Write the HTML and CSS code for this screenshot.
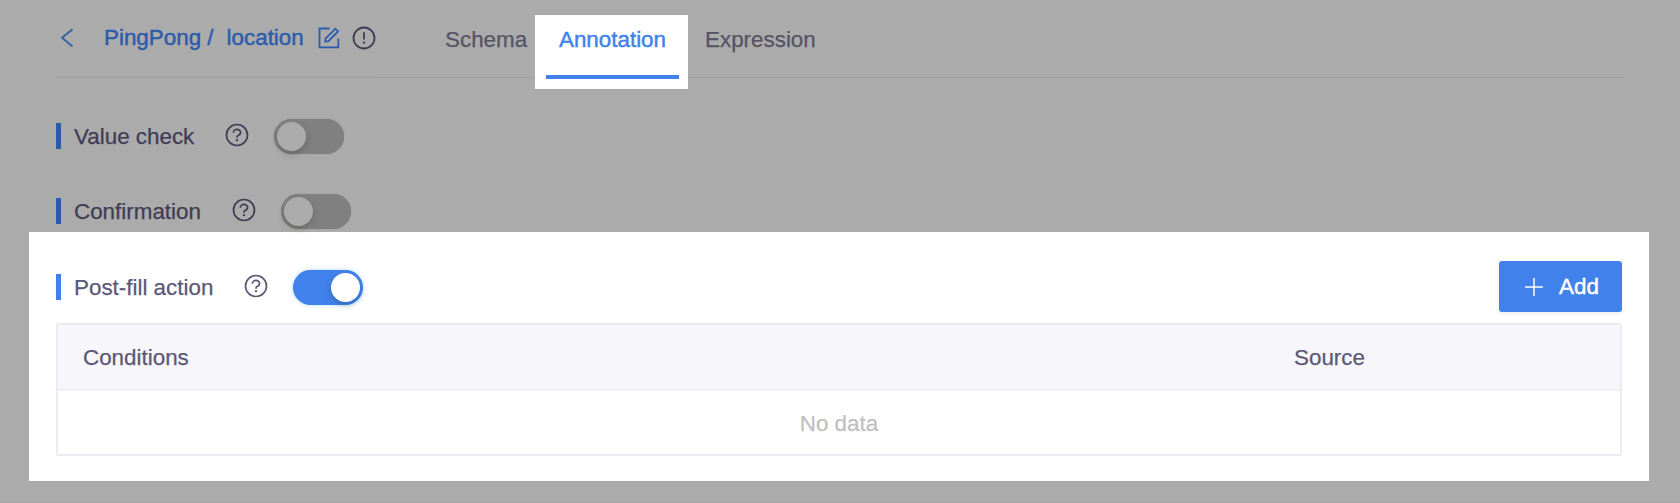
FILE: index.html
```html
<!DOCTYPE html>
<html lang="en">
<head>
<meta charset="utf-8">
<title>PingPong / location</title>
<link rel="stylesheet" href="styles.css">
</head>
<body>
<svg class="defs" width="0" height="0">
  <symbol id="help" viewBox="0 0 24 24">
    <circle cx="12" cy="12" r="10.5"/>
    <path d="M8.400 9.700V9.400a3.600 3 0 0 1 7.200 0c0 1.700-1.100 2.300-2.100 2.800-1 .4-1.500 1-1.500 2v.5"/>
    <path class="dot" d="M12 16.200v1.900"/>
  </symbol>
</svg>
<div class="page">
  <header class="header">
    <div class="crumbs">
      <svg class="back" viewBox="0 0 14 20"><path d="M12.500 1.200 2 9.800l10.500 8.600"/></svg>
      <span class="parent">PingPong /</span>
      <span class="current">location</span>
      <svg class="edit" viewBox="0 0 22 22"><path d="M11.500 1.500H1.500v18.800h18.800V11.500"/><path d="M7.200 14.600l.5-3.200 9.700-9.700 2.700 2.700-9.700 9.700z"/></svg>
      <svg class="info" viewBox="0 0 24 24"><circle cx="12" cy="12" r="10.500"/><path d="M12 6.200v7.400"/><path class="dot" d="M12 15.600v2"/></svg>
    </div>
    <nav class="tabs">
      <a class="tab schema">Schema</a>
      <a class="tab active"><span class="tab-label">Annotation</span></a>
      <a class="tab expression">Expression</a>
    </nav>
  </header>
  <section class="setting">
    <span class="label">Value check</span>
    <svg class="help"><use href="#help"/></svg>
    <span class="switch"><i class="knob"></i></span>
  </section>
  <section class="setting second">
    <span class="label">Confirmation</span>
    <svg class="help"><use href="#help"/></svg>
    <span class="switch"><i class="knob"></i></span>
  </section>
  <section class="panel">
    <div class="setting bright">
      <span class="label">Post-fill action</span>
      <svg class="help"><use href="#help"/></svg>
      <span class="switch on"><i class="knob"></i></span>
      <button class="add"><svg class="plus" viewBox="0 0 18 18"><path d="M0 9h18M9 0v18"/></svg>Add</button>
    </div>
    <div class="table">
      <div class="thead"><span>Conditions</span><span class="source">Source</span></div>
      <div class="empty">No data</div>
    </div>
  </section>
</div>
</body>
</html>
```
FILE: styles.css
```css
* { box-sizing: border-box; }
body {
  margin: 0;
  background: #ababab;
  color: #3f3c55;
  font: 22.4px/26px "Liberation Sans", Arial, sans-serif;
  -webkit-text-stroke: 0.25px currentColor;
  overflow: hidden;
}
.defs { display: block; }
svg { fill: none; stroke: currentColor; flex: none; }
.page {
  height: 503px;
  border-bottom: 1px solid #a5a4a6;
}
.header {
  display: flex;
  height: 78px;
  margin: 0 57px 0 56px;
  white-space: nowrap;
}
.crumbs {
  display: flex;
  align-items: center;
  width: 319px;
  height: 78px;
  border-bottom: 2px solid #a0a1a9;
  color: #2b5cab;
  -webkit-text-stroke: 0.45px currentColor;
}
.back { width: 14px; height: 20px; margin-left: 4px; stroke-width: 1.8; }
.parent { margin-left: 30px; }
.current { margin-left: 13px; }
.edit { width: 22px; height: 22px; margin-left: 14px; stroke-width: 1.8; }
.info { width: 24px; height: 24px; margin-left: 12px; color: #3f3c55; stroke-width: 1.8; }
.tabs {
  display: flex;
  flex: 1;
  height: 78px;
  border-bottom: 1px solid #a0a0a2;
  color: #565363;
}
.tab { padding-top: 27px; }
.schema { width: 160px; padding-left: 70px; }
.active {
  width: 153px;
  height: 74px;
  margin-top: 15px;
  padding: 12px 9px 0 11px;
  background: #fff;
  color: #4181eb;
  text-align: center;
  -webkit-text-stroke: 0.45px currentColor;
}
.tab-label {
  display: block;
  height: 52px;
  border-bottom: 4px solid #4181eb;
}
.expression { padding-left: 17px; }
.setting {
  display: flex;
  align-items: center;
  height: 36px;
  margin: 40px 58px 0 56px;
}
.second { margin-top: 39px; }
.label {
  height: 26px;
  padding-left: 13px;
  border-left: 5px solid #2b5cab;
  line-height: 28px;
  white-space: nowrap;
}
.help { width: 24px; height: 24px; margin: 0 25px 2px 31px; stroke-width: 1.7; }
.dot { stroke-width: 2.2; }
.switch {
  width: 70px;
  height: 35px;
  padding: 3px;
  border-radius: 18px;
  background: #808080;
  box-shadow: 0 0 1px #808080;
}
.knob {
  display: block;
  width: 29px;
  height: 29px;
  border-radius: 50%;
  background: #ababab;
  box-shadow: 0 3px 6px rgba(0, 35, 11, .22);
}
.on { margin-top: 1px; background: #4181eb; box-shadow: 0 0 4px rgba(24, 144, 255, .35); }
.on .knob { margin-left: auto; background: #fff; }
.panel {
  height: 249px;
  margin: 3px 31px 0 29px;
  padding: 29px 27px 0;
  background: #fff;
  color: #5c5876;
}
.bright { height: 51px; margin: 0; }
.bright .label { border-color: #4181eb; }
.add {
  display: flex;
  align-items: center;
  width: 123px;
  height: 51px;
  margin-left: auto;
  padding: 1px 0 0 26px;
  border: 0;
  border-radius: 3px;
  background: #4181eb;
  box-shadow: 0 3px 2px rgba(0, 0, 0, .045);
  color: #fff;
  font: inherit;
  -webkit-text-stroke: 0.45px currentColor;
}
.plus { width: 18px; height: 18px; margin-right: 16px; stroke-width: 1.5; }
.table {
  height: 133px;
  margin-top: 11px;
  border: 2px solid #ebebf6;
  border-radius: 3px;
}
.thead {
  display: flex;
  align-items: center;
  height: 66px;
  padding: 2px 24px 0 25px;
  border-bottom: 2px solid #f0f0f1;
  background: #f6f6fb;
}
.source { margin-left: auto; width: 302px; }
.empty {
  height: 63px;
  line-height: 65px;
  color: #c0c0c0;
  text-align: center;
}
```
